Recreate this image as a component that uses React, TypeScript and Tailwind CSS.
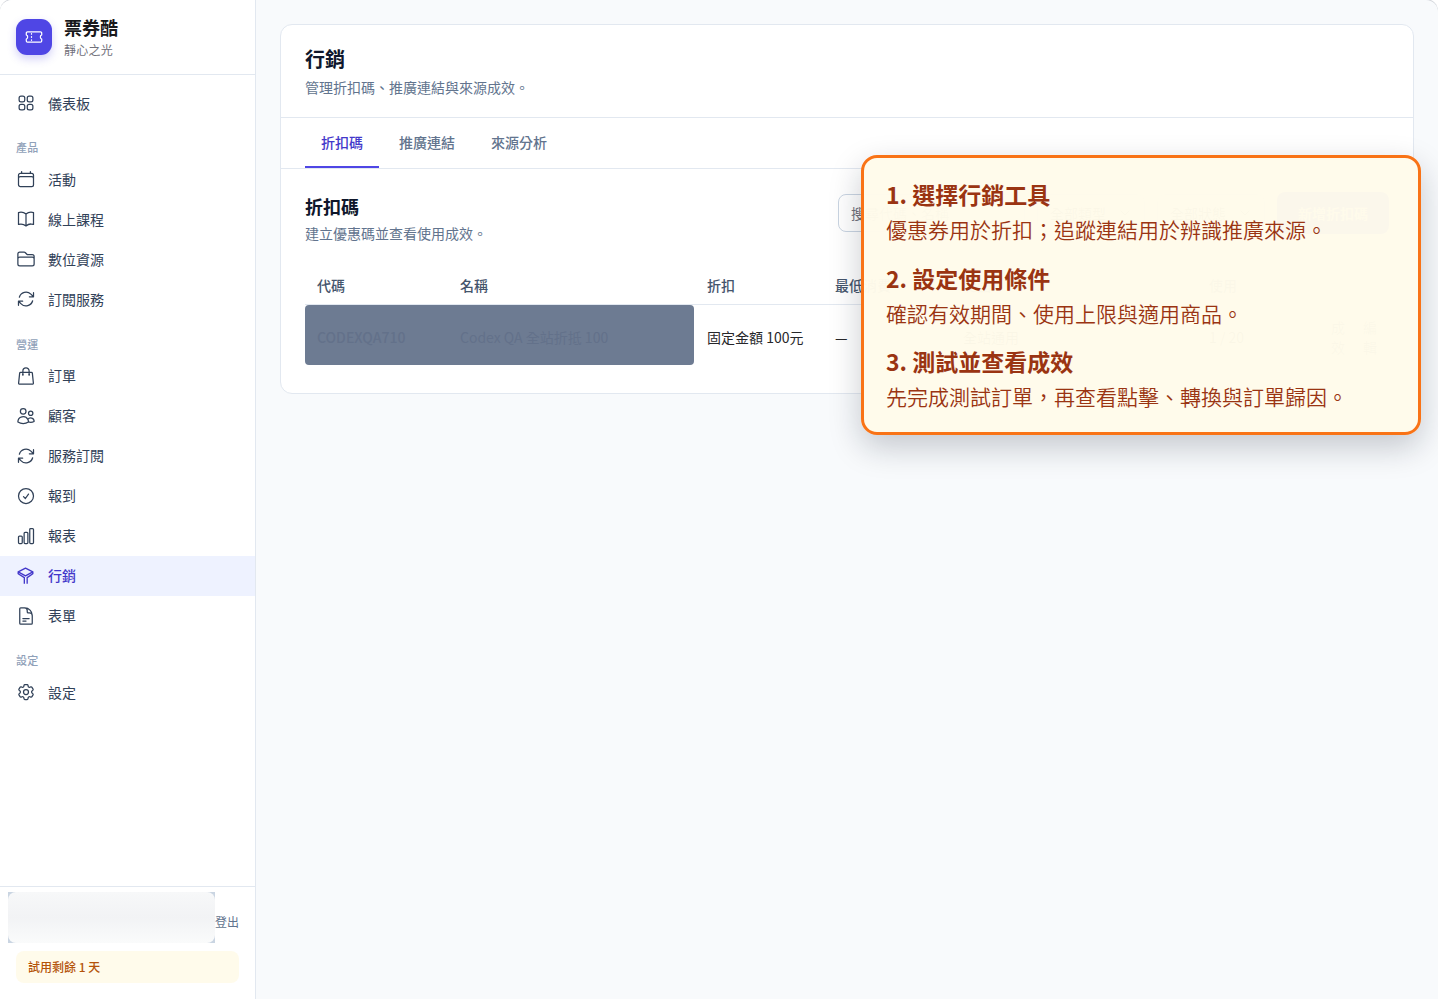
import React from "react";
import {
  HiOutlineArrowPath,
  HiOutlineBookOpen,
  HiOutlineCalendar,
  HiOutlineChartBar,
  HiOutlineCheckCircle,
  HiOutlineCog6Tooth,
  HiOutlineDocumentText,
  HiOutlineFolder,
  HiOutlineShoppingBag,
  HiOutlineSquares2X2,
  HiOutlineUsers,
  HiOutlineChevronDown,
} from "react-icons/hi2";

type IconType = React.ComponentType<{ className?: string }>;

function SignIcon({ className }: { className?: string }) {
  return (
    <svg viewBox="0 0 24 24" fill="none" stroke="currentColor" strokeWidth={1.6} strokeLinejoin="round" className={className}>
      <path d="M11.4 2.6L20.2 7L11.4 11.8L2.6 7ZM2.6 7V9.3L10 14V21.4M20.2 7V9.3L13.4 14V21.4" />
    </svg>
  );
}

function TicketIcon({ className }: { className?: string }) {
  return (
    <svg viewBox="0 0 20 20" fill="none" stroke="currentColor" strokeWidth={1.25} strokeLinejoin="round" strokeLinecap="round" className={className}>
      <path d="M3.5 4.9H16.5A1.2 1.2 0 0 1 17.7 6.1V7.9A2.3 2.3 0 0 0 17.7 12.1V13.9A1.2 1.2 0 0 1 16.5 15.1H3.5A1.2 1.2 0 0 1 2.3 13.9V12.1A2.3 2.3 0 0 0 2.3 7.9V6.1A1.2 1.2 0 0 1 3.5 4.9Z" />
      <path d="M7.5 6.7V7.2M7.5 9.7V10.3M7.5 12.8V13.3" />
    </svg>
  );
}

const groups: { title?: string; items: { label: string; icon: IconType; active?: boolean }[] }[] = [
  { items: [{ label: "儀表板", icon: HiOutlineSquares2X2 }] },
  {
    title: "產品",
    items: [
      { label: "活動", icon: HiOutlineCalendar },
      { label: "線上課程", icon: HiOutlineBookOpen },
      { label: "數位資源", icon: HiOutlineFolder },
      { label: "訂閱服務", icon: HiOutlineArrowPath },
    ],
  },
  {
    title: "營運",
    items: [
      { label: "訂單", icon: HiOutlineShoppingBag },
      { label: "顧客", icon: HiOutlineUsers },
      { label: "服務訂閱", icon: HiOutlineArrowPath },
      { label: "報到", icon: HiOutlineCheckCircle },
      { label: "報表", icon: HiOutlineChartBar },
      { label: "行銷", icon: SignIcon, active: true },
      { label: "表單", icon: HiOutlineDocumentText },
    ],
  },
  { title: "設定", items: [{ label: "設定", icon: HiOutlineCog6Tooth }] },
];

function Sidebar() {
  return (
    <aside className="flex w-64 shrink-0 flex-col border-r border-slate-200 bg-white">
      <div className="flex h-[75px] shrink-0 items-center gap-3 border-b border-slate-200 px-4">
        <div className="flex size-9 items-center justify-center rounded-[11px] bg-[#4f46e5] text-white shadow-[0_4px_8px_rgba(79,70,229,0.25)]">
          <TicketIcon className="size-5" />
        </div>
        <div>
          <div className="text-lg/[22px] font-bold text-[#18181b]">票券酷</div>
          <div className="mt-0.5 pt-px text-xs/[18px] tracking-[0.02em] text-zinc-500">靜心之光</div>
        </div>
      </div>
      <nav className="flex-1 pt-2">
        {groups.map((g, i) => (
          <div key={i}>
            {g.title && (
              <div className="px-4 pt-[16.4px] pb-[3.6px] text-[11px]/[16.5px] font-medium tracking-[0.03em] text-slate-400">{g.title}</div>
            )}
            {g.items.map(({ label, icon: Icon, active }) => (
              <div
                key={label}
                className={
                  active
                    ? "flex h-10 items-center gap-3 bg-[#eef2ff] px-4 text-sm font-medium text-[#4338ca]"
                    : "flex h-10 items-center gap-3 px-4 text-sm text-slate-700"
                }
              >
                <Icon className="size-5" />
                <span className="pb-px">{label}</span>
              </div>
            ))}
          </div>
        ))}
      </nav>
      <div className="h-[113px] shrink-0 border-t border-slate-200 pt-[5px]">
        <div className="flex h-[51px] items-center pl-2">
          <div className="h-full w-[207px] bg-slate-300">
            <div className="h-full w-full rounded-lg bg-linear-to-b from-[#f7f8f9] via-[#f2f3f5] to-[#fafbfb]" />
          </div>
          <span className="pt-2 text-xs text-slate-500">登出</span>
        </div>
        <div className="mx-4 mt-2 flex h-8 items-center rounded-lg bg-[#fffbeb] px-3 text-xs font-medium text-[#b45309]">試用剩餘 1 天</div>
      </div>
    </aside>
  );
}

function Filter({ label }: { label: string }) {
  return (
    <div className="flex h-[38px] w-[108px] items-center justify-between rounded-lg border border-slate-300 px-3 text-sm text-zinc-700">
      {label}
      <HiOutlineChevronDown className="size-3.5" />
    </div>
  );
}

const columns = "grid grid-cols-[143px_247px_128px_128px_246px_122px_70px]";

function Coupons() {
  return (
    <section className="px-6 pt-[23px]">
      <div className="flex items-start justify-between">
        <div>
          <h2 className="text-lg/7 font-semibold text-slate-900">折扣碼</h2>
          <p className="mt-[3px] text-sm/5 text-slate-500">建立優惠碼並查看使用成效。</p>
        </div>
        <div className="flex items-center gap-3">
          <div className="flex h-[38px] w-[187px] items-center rounded-lg border border-slate-300 px-3 text-sm text-zinc-500">搜尋代碼、名稱</div>
          <Filter label="全部類型" />
          <Filter label="全部狀態" />
          <div className="flex h-[42px] w-28 items-center justify-center rounded-lg bg-[#4f46e5] text-sm font-medium text-white">新增折扣碼</div>
        </div>
      </div>
      <div className={columns + " mt-[25px] h-[37px] items-center border-b border-slate-200 pb-0.5 pl-3 text-sm font-medium text-slate-600"}>
        <span>代碼</span>
        <span>名稱</span>
        <span>折扣</span>
        <span>最低消費</span>
        <span>範圍</span>
        <span>使用</span>
        <span />
      </div>
      <div className="relative h-[60px]">
        <div className="absolute inset-y-0 left-0 w-[389px] rounded bg-[#6d7b92]" />
        <div className={columns + " relative h-16 items-center pl-3 text-sm text-[#27272a]"}>
          <span className="font-medium text-[#63718a]">CODEXQA710</span>
          <span className="text-[#63718a]">Codex QA 全站折抵 100</span>
          <span>固定金額 100元</span>
          <span>—</span>
          <span>全站通用</span>
          <span>1 / 20</span>
          <span className="flex gap-[18px] leading-5 text-slate-600">
            <span className="w-3.5">成效</span>
            <span className="w-3.5">編輯</span>
          </span>
        </div>
      </div>
    </section>
  );
}

const steps = [
  ["1. 選擇行銷工具", "優惠券用於折扣；追蹤連結用於辨識推廣來源。"],
  ["2. 設定使用條件", "確認有效期間、使用上限與適用商品。"],
  ["3. 測試並查看成效", "先完成測試訂單，再查看點擊、轉換與訂單歸因。"],
];

export default function App() {
  return (
    <div lang="zh-Hant" className="relative h-[1000px] w-[1438px] overflow-hidden bg-white font-['Noto_Sans_CJK_TC',sans-serif]">
      <div className="flex h-[999px] overflow-hidden rounded-t-[12px] bg-slate-50 shadow-[0_-1px_0_0_#d4d7dc]">
        <Sidebar />
        <main className="flex-1 px-6 pt-6">
          <div className="h-[370px] w-[1134px] rounded-xl border border-slate-200 bg-white">
            <header className="h-[93px] border-b border-slate-200 px-6 pt-5">
              <h1 className="text-xl/7 font-semibold text-slate-900">行銷</h1>
              <p className="mt-1 text-sm/5 text-slate-500">管理折扣碼、推廣連結與來源成效。</p>
            </header>
            <div className="flex h-[51px] gap-1 border-b border-slate-200 px-6 text-sm font-medium text-slate-500">
              <div className="border-b-2 border-[#4f46e5] px-4 pt-[14px] text-[#4338ca]">折扣碼</div>
              <div className="px-4 pt-[14px]">推廣連結</div>
              <div className="px-4 pt-[14px]">來源分析</div>
            </div>
            <Coupons />
          </div>
        </main>
      </div>
      <div className="absolute top-[155px] left-[861px] h-[280px] w-[560px] rounded-2xl border-3 border-[#f97316] bg-[#fffbeb]/98 px-[22px] pt-[19px] text-[#9a3412] shadow-[0_12px_32px_rgba(15,23,42,0.22)]">
        {steps.map(([title, text]) => (
          <div key={title} className="h-[83.6px]">
            <div className="text-[23px]/[34px] font-bold">{title}</div>
            <div className="text-[21px]/[36px] font-[350]">{text}</div>
          </div>
        ))}
      </div>
    </div>
  );
}
